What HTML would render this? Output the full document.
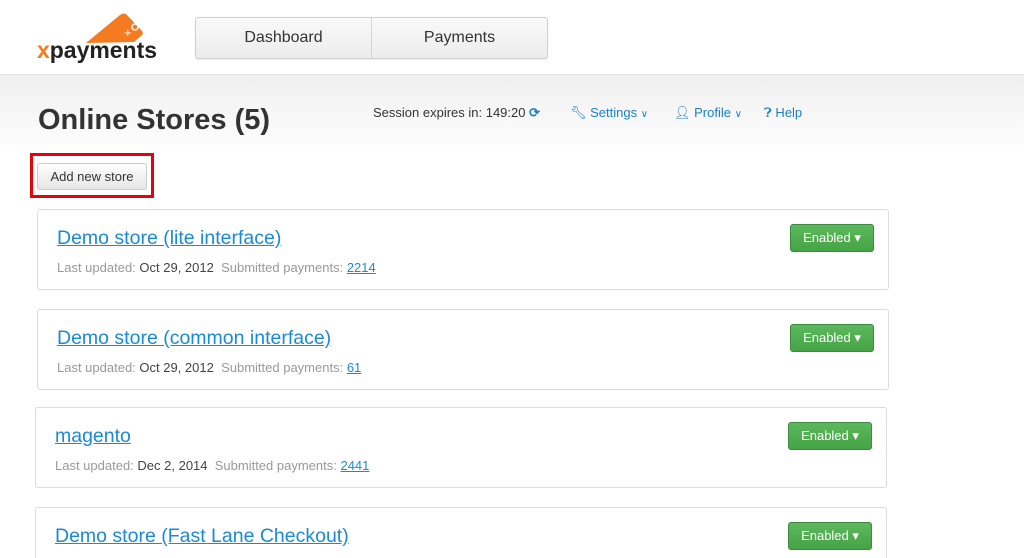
<!DOCTYPE html>
<html><head><style>
html,body{margin:0;width:1024px;height:558px;overflow:hidden}
body{font-family:"Liberation Sans",sans-serif;background:#fff;position:relative}
.hdr{position:absolute;left:0;top:0;width:1024px;height:74px;background:#fff}
.band{position:absolute;left:0;top:74px;width:1024px;height:80px;background:linear-gradient(#efefef,#fff);border-top:1px solid #e4e4e4}
.nav{position:absolute;left:195px;top:17px;width:351px;height:40px;border:1px solid #cfcfcf;border-radius:3px;background:linear-gradient(#fafafa,#ececec);display:flex;box-shadow:0 1px 1px rgba(0,0,0,.08)}
.nav div{flex:1;text-align:center;line-height:40px;font-size:16px;color:#333}
.nav div+div{border-left:1px solid #d6d6d6}
h1{position:absolute;left:38px;top:104px;margin:0;font-size:29px;font-weight:bold;color:#333}
.top{position:absolute;top:105px;font-size:13px;color:#333}
.blue{color:#1a7fc8}
.redbox{position:absolute;left:30px;top:153px;width:124px;height:45px;border:3px solid #e8000b;box-sizing:border-box}
.btn{position:absolute;left:37px;top:163px;width:110px;height:27px;border:1px solid #ccc;border-radius:3px;background:linear-gradient(#fff,#e6e6e6);font-size:13px;color:#333;text-align:center;line-height:26px;box-sizing:border-box}
.card{position:absolute;width:852px;height:81px;border:1px solid #dcdcdc;border-radius:3px;box-sizing:border-box;background:#fff}
.card a{position:absolute;left:19px;top:17px;font-size:19.5px;color:#1a8ad6;text-decoration:underline}
.card .m{position:absolute;left:19px;top:50px;font-size:13px;color:#999}
.card .m b{font-weight:normal;color:#444}
.card .m u{color:#1a8ad6}
.en{position:absolute;right:14px;top:14px;width:84px;height:28px;border-radius:3px;background:linear-gradient(#5cb85c,#45a445);border:1px solid #3d8b3d;box-sizing:border-box;color:#fff;font-size:13px;text-align:center;line-height:26px}
</style></head><body>
<div class="hdr">
<svg width="130" height="55" style="position:absolute;left:36px;top:10px">
<path d="M50,33 L84,5 Q88,2 91,5 L106,21 Q108,24 105,26 L98,32 Z" fill="#f47b20"/>
<text x="88" y="27" fill="#fff" font-size="13" font-family="Liberation Sans">+</text>
<circle cx="99" cy="17" r="3" fill="none" stroke="#fff" stroke-width="1.5"/>
<text x="1" y="48" font-size="23" font-weight="bold" font-family="Liberation Sans" fill="#222" textLength="120" lengthAdjust="spacingAndGlyphs"><tspan fill="#f47b20">x</tspan>payments</text>
</svg>
<div class="nav"><div>Dashboard</div><div>Payments</div></div>
</div>
<div class="band"></div>
<h1>Online Stores (5)</h1>
<div class="top" style="left:373px">Session expires in: 149:20 <span class="blue" style="font-weight:bold">⟳</span></div>
<div class="top blue" style="left:570px">🔧︎ Settings <span style="font-size:10px">∨</span></div>
<div class="top blue" style="left:674px">👤︎ Profile <span style="font-size:10px">∨</span></div>
<div class="top blue" style="left:764px">❓︎ Help</div>
<div class="redbox"></div>
<div class="btn">Add new store</div>
<div class="card" style="left:37px;top:209px"><a>Demo store (lite interface)</a><div class="m">Last updated: <b>Oct 29, 2012</b>&nbsp; Submitted payments: <u>2214</u></div><div class="en">Enabled ▾</div></div>
<div class="card" style="left:37px;top:309px"><a>Demo store (common interface)</a><div class="m">Last updated: <b>Oct 29, 2012</b>&nbsp; Submitted payments: <u>61</u></div><div class="en">Enabled ▾</div></div>
<div class="card" style="left:35px;top:407px"><a>magento</a><div class="m">Last updated: <b>Dec 2, 2014</b>&nbsp; Submitted payments: <u>2441</u></div><div class="en">Enabled ▾</div></div>
<div class="card" style="left:35px;top:507px;height:51px;border-bottom:none;border-radius:3px 3px 0 0"><a>Demo store (Fast Lane Checkout)</a><div class="en">Enabled ▾</div></div>
</body></html>
